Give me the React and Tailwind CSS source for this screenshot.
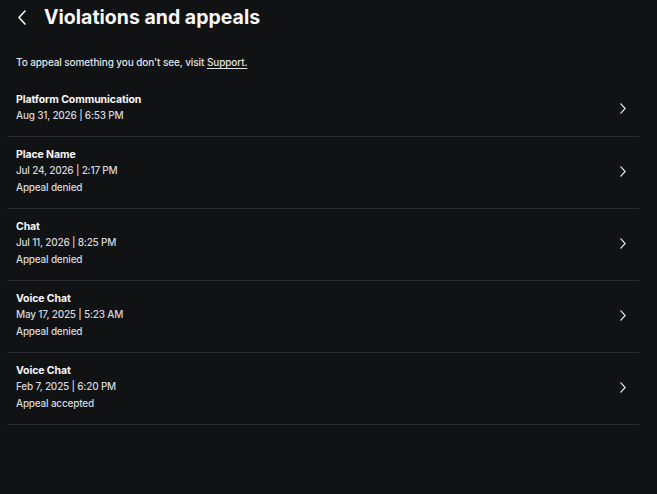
const violations = [
  { title: 'Platform Communication', date: 'Aug 31, 2026 | 6:53 PM' },
  { title: 'Place Name', date: 'Jul 24, 2026 | 2:17 PM', status: 'Appeal denied' },
  { title: 'Chat', date: 'Jul 11, 2026 | 8:25 PM', status: 'Appeal denied' },
  { title: 'Voice Chat', date: 'May 17, 2025 | 5:23 AM', status: 'Appeal denied' },
  { title: 'Voice Chat', date: 'Feb 7, 2025 | 6:20 PM', status: 'Appeal accepted' },
]

function Chevron({ dir = 'right', className = '' }) {
  const d = dir === 'right' ? 'M1 1l5 5.5L1 12' : 'M7 1L1 7.5 7 14'
  return (
    <svg className={className} viewBox={dir === 'right' ? '0 0 7 13' : '0 0 8 15'} fill="none">
      <path d={d} stroke="currentColor" strokeWidth="1.6" strokeLinecap="round" strokeLinejoin="round" />
    </svg>
  )
}

function ViolationRow({ item }) {
  return (
    <button className="flex w-full items-center justify-between border-b border-[#2b2c30] pl-[9px] pr-[13px] pt-[11px] pb-[13px] text-left">
      <div className="flex flex-col">
        <span className="text-[10.5px] font-bold leading-[14px] tracking-[-0.1px] text-[#f7f7f8]">{item.title}</span>
        <span className="text-[10px] font-medium leading-[16px] tracking-[-0.2px] text-[#d5d7dd]">{item.date}</span>
        {item.status && (
          <span className="mt-[1px] text-[10px] font-medium leading-[16px] tracking-[-0.2px] text-[#d5d7dd]">
            {item.status}
          </span>
        )}
      </div>
      <Chevron className="h-[11px] w-[6px] text-[#d5d7dd]" />
    </button>
  )
}

export default function App() {
  return (
    <div className="min-h-screen bg-[#111214] text-white" style={{ fontFamily: 'Inter, "Noto Sans", sans-serif' }}>
      <div className="flex h-[34px] items-center">
        <button className="ml-[18px] flex h-[16px] w-[9px] items-center text-[#f7f7f8]">
          <Chevron dir="left" className="h-[15px] w-[8px]" />
        </button>
        <h1 className="ml-[17px] text-[19.5px] font-bold leading-[24px] text-[#f7f7f8]">Violations and appeals</h1>
      </div>
      <p className="ml-[16px] mt-[20px] text-[10px] font-medium leading-[16px] tracking-[-0.1px] text-[#e2e4e8]">
        To appeal something you don't see, visit <a className="underline underline-offset-2">Support.</a>
      </p>
      <div className="ml-[7px] mr-[18px] mt-[12px]">
        {violations.map((v, i) => (
          <ViolationRow key={i} item={v} />
        ))}
      </div>
    </div>
  )
}
